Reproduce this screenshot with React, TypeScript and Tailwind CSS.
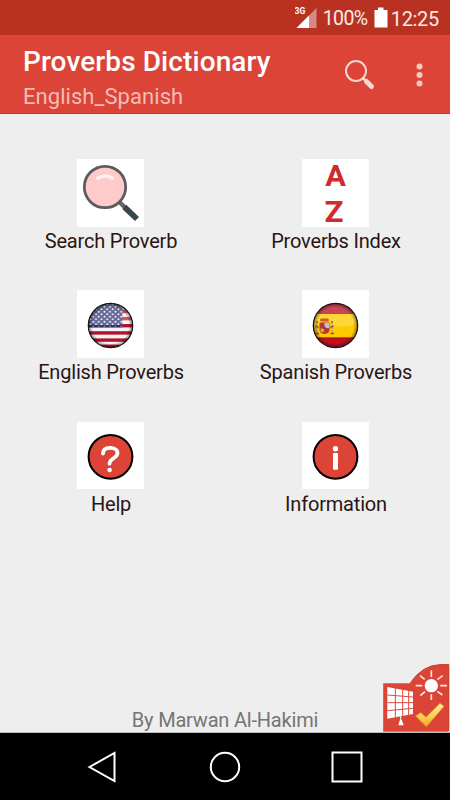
import React from 'react';

interface MenuItem {
    label: string;
    icon: React.ReactNode;
}

const SearchIcon: React.FC = () => (
    <svg width="67" height="68" viewBox="0 0 67 68">
        <path d="M42 42.500l6 6" stroke="#666" strokeWidth="4.500" />
        <path d="M47.300 47.800L60 60" stroke="#37474f" strokeWidth="5.800" />
        <circle cx="28" cy="28" r="20.700" fill="#ffcaca" stroke="#5c5c5f" strokeWidth="2.800" />
        <path d="M21 19.200q7-4.400 14.500 0" fill="none" stroke="#fff0f0" strokeWidth="3.600" strokeLinecap="round" />
    </svg>
);

const IndexIcon: React.FC = () => (
    <svg width="67" height="68" viewBox="0 0 67 68" fill="#cf2a2c" className="overflow-visible font-['Roboto',sans-serif] text-[30px] font-bold">
        <text x="23.300" y="27.300" textLength="20.700" lengthAdjust="spacingAndGlyphs">A</text>
        <text x="22.500" y="63" textLength="19" lengthAdjust="spacingAndGlyphs">Z</text>
    </svg>
);

const UsFlagIcon: React.FC = () => (
    <svg width="67" height="68" viewBox="0 0 67 68">
        <defs>
            <clipPath id="us-clip"><circle cx="33.500" cy="35.500" r="22" /></clipPath>
            <radialGradient id="us-shade">
                <stop offset="0.8" stopColor="#000" stopOpacity="0" />
                <stop offset="1" stopColor="#000" stopOpacity="0.45" />
            </radialGradient>
            <pattern id="us-stars" width="5.600" height="5" patternUnits="userSpaceOnUse" x="12" y="13">
                <circle cx="1.400" cy="1.300" r="0.950" fill="#fff" />
                <circle cx="4.200" cy="3.800" r="0.950" fill="#fff" />
            </pattern>
        </defs>
        <g clipPath="url(#us-clip)">
            <rect x="11" y="13" width="45" height="45" fill="#f4f2f3" />
            {[12.6, 19.8, 26.9, 34, 41.2, 48.4, 54.6].map((y) => (
                <rect key={y} x="11" y={y} width="45" height="3.400" fill="#b3122c" />
            ))}
            <rect x="11" y="13" width="34.300" height="24.300" fill="#252766" />
            <rect x="11" y="13" width="34.300" height="23.500" fill="url(#us-stars)" />
            <path d="M11 12h45v21q-22 4-45 1z" fill="#fff" fillOpacity="0.300" />
        </g>
        <circle cx="33.500" cy="35.500" r="22.500" fill="url(#us-shade)" />
        <circle cx="33.500" cy="35.500" r="22.200" fill="none" stroke="#141318" strokeWidth="1.200" />
    </svg>
);

const SpainFlagIcon: React.FC = () => (
    <svg width="67" height="68" viewBox="0 0 67 68">
        <defs>
            <clipPath id="es-clip"><circle cx="33.500" cy="35.500" r="22" /></clipPath>
            <radialGradient id="es-shade">
                <stop offset="0.8" stopColor="#000" stopOpacity="0" />
                <stop offset="1" stopColor="#000" stopOpacity="0.45" />
            </radialGradient>
        </defs>
        <g clipPath="url(#es-clip)">
            <rect x="11" y="12" width="45" height="47" fill="#bd1022" />
            <rect x="11" y="24" width="45" height="23.300" fill="#fecb00" />
            <path d="M11 12h45v20q-5 4-15 4.500t-30-2z" fill="#fff" fillOpacity="0.220" />
            <g>
                <rect x="18" y="28.500" width="9" height="3" rx="1.500" fill="#c1622c" />
                <path d="M17.500 32.500h10v7q0 4-5 4.500q-5-.5-5-4.500z" fill="#b93a2b" />
                <rect x="22.500" y="33" width="4.500" height="5" fill="#d9b9bd" />
                <rect x="18.500" y="38.500" width="3.500" height="3.500" fill="#e0a42d" />
                <circle cx="22.500" cy="38" r="1.400" fill="#41559b" />
                <path d="M15 33v9.500M30 33v9.500" stroke="#b7ab9c" strokeWidth="1.600" />
                <path d="M13.500 36l3 1.500M31.500 36l-3 1.500M13.500 43.500h3.500M28.500 43.500h3.500" stroke="#a64637" strokeWidth="1.400" />
                <path d="M14 32h2M29 32h2" stroke="#9a5a30" strokeWidth="1.600" />
            </g>
        </g>
        <circle cx="33.500" cy="35.500" r="22.500" fill="url(#es-shade)" />
        <circle cx="33.500" cy="35.500" r="22.200" fill="none" stroke="#1a1212" strokeWidth="1.200" />
    </svg>
);

const HelpIcon: React.FC = () => (
    <svg width="67" height="68" viewBox="0 0 67 68">
        <circle cx="33.500" cy="34.800" r="21.900" fill="#db4437" stroke="#000" strokeWidth="2" />
        <path d="M26 31.500c0-4.300 3.300-5.600 7-5.600c4.300 0 7.500 1.800 7.500 5.200c0 5.200-8 5.200-8 10.600" fill="none" stroke="#fff" strokeWidth="3.800" strokeLinecap="round" />
        <circle cx="32.600" cy="48" r="2.300" fill="#fff" />
    </svg>
);

const InfoIcon: React.FC = () => (
    <svg width="67" height="68" viewBox="0 0 67 68">
        <circle cx="33.500" cy="34.800" r="21.900" fill="#db4437" stroke="#000" strokeWidth="2" />
        <circle cx="33.500" cy="26.700" r="2.700" fill="#fff" />
        <rect x="31" y="31" width="5" height="16.700" rx="0.800" fill="#fff" />
    </svg>
);

const MENU_ITEMS: MenuItem[] = [
    { label: 'Search Proverb', icon: <SearchIcon /> },
    { label: 'Proverbs Index', icon: <IndexIcon /> },
    { label: 'English Proverbs', icon: <UsFlagIcon /> },
    { label: 'Spanish Proverbs', icon: <SpainFlagIcon /> },
    { label: 'Help', icon: <HelpIcon /> },
    { label: 'Information', icon: <InfoIcon /> },
];

const StatusBar: React.FC = () => (
    <div className="flex h-[35px] items-center justify-end bg-[#b93221] pr-[11px] text-xl leading-6 text-[#fbeae8]">
        <svg width="22" height="24" viewBox="0 0 22 24" className="mt-px mr-1.5">
            <text x="-0.500" y="7.500" fill="#fff" className="text-[8.500px] font-bold">3G</text>
            <path d="M21.500 2v20H1.500z" fill="#d98a80" />
            <path d="M14 9.500V22H1.500z" fill="#fff" />
        </svg>
        <span className="mt-[3px] w-[45px] text-[19.500px] tracking-[-0.600px] whitespace-nowrap">100%</span>
        <svg width="14" height="21" viewBox="0 0 14 21" className="mr-[3px] ml-[6px]">
            <path d="M4 .5h5.500v2.500H13.500V20.500H.5V3H4z" fill="#fff" />
        </svg>
        <span className="mt-[3px] tracking-[-0.300px]">12:25</span>
    </div>
);

const AppBar: React.FC = () => (
    <header className="flex h-[79px] items-center border-b border-[#c9321f] bg-[#db4437] pr-[27.500px] pl-[23px]">
        <div className="flex-1 pt-[11px]">
            <h1 className="text-[28px] leading-[34px] font-medium tracking-[0.100px] text-white">Proverbs Dictionary</h1>
            <p className="text-[22px] leading-[35px] tracking-[0.050px] text-[#f3bcb7]">English_Spanish</p>
        </div>
        <svg width="32" height="32" viewBox="0 0 32 32" className="mt-[2px] mr-[39.500px]" fill="none" stroke="#f9d5d2">
            <circle cx="12" cy="12" r="10" strokeWidth="2" />
            <path d="M19 19l4 4" strokeWidth="2.500" />
            <path d="M22.500 22.500l5 5" strokeWidth="5" strokeLinecap="round" />
        </svg>
        <svg width="7" height="24" viewBox="0 0 7 24" className="mt-[2px]" fill="#f7c9c5">
            <circle cx="3.500" cy="3.500" r="3" />
            <circle cx="3.500" cy="12" r="3" />
            <circle cx="3.500" cy="20.500" r="3" />
        </svg>
    </header>
);

const BrandLogo: React.FC = () => (
    <svg width="67" height="68" viewBox="40 29 201 204" className="absolute right-0 bottom-0">
        <defs>
            <linearGradient id="check-fill" x1="0" y1="0" x2="0" y2="1">
                <stop offset="0" stopColor="#fff0a0" />
                <stop offset="0.5" stopColor="#ffd45c" />
                <stop offset="1" stopColor="#efa51e" />
            </linearGradient>
        </defs>
        <path d="M41 88h80q36-55 90-57h26v199H41z" fill="#db4437" stroke="#f0602c" strokeWidth="3" />
        <path d="M120 88q36-55 91-57h26v199H41" fill="none" stroke="#b5291f" strokeWidth="2" />
        <path d="M53 98l77 14v67l-77 14z" fill="#fff" />
        <path d="M53 122l77 6M53 145h77M53 169l77-7M77 100v90M99 104v83M117 108v76" stroke="#d94b40" strokeWidth="3" />
        <path d="M93 185v14" stroke="#fff" strokeWidth="3" />
        <path d="M91 196h5l6 17H86z" fill="#fff" />
        <circle cx="185" cy="94" r="20" fill="#fff" />
        <path d="M185 48v20M185 120v17M138 94h20M212 94h20M151 64l14 11M219 64l-16 12M152 124l14-12M218 122l-15-11" stroke="#ffe4e0" strokeWidth="5" />
        <path d="M138 185l15-10l16 14l42-42l12 9l-53 61z" fill="url(#check-fill)" stroke="#e69b25" strokeWidth="2" />
    </svg>
);

const NavBar: React.FC = () => (
    <nav className="flex h-[67px] items-center justify-center gap-[90.500px] bg-black pr-px">
        <svg width="32" height="32" viewBox="0 0 32 32" fill="none" stroke="#fff" strokeWidth="2">
            <path d="M3.500 16L28.500 2v28z" />
        </svg>
        <svg width="32" height="32" viewBox="0 0 32 32" fill="none" stroke="#fff" strokeWidth="2">
            <circle cx="16" cy="16" r="14.200" />
        </svg>
        <svg width="32" height="32" viewBox="0 0 32 32" fill="none" stroke="#fff" strokeWidth="2">
            <rect x="1.500" y="1.500" width="29" height="29" />
        </svg>
    </nav>
);

const App: React.FC = () => {
    return (
        <div className="flex h-[800px] w-[450px] flex-col overflow-hidden bg-[#eeeeee] font-['Roboto',sans-serif]">
            <StatusBar />
            <AppBar />
            <main className="relative flex flex-1 flex-col border-b border-[#bdbdbd] pt-[45px]">
                <div className="grid grid-cols-2">
                    {MENU_ITEMS.map((item) => (
                        <button key={item.label} className="flex h-[131.300px] flex-col items-center pr-1">
                            <span className="h-[67.500px] w-[67px] bg-white">{item.icon}</span>
                            <span className="mt-[2.500px] pl-px text-xl leading-6 tracking-[-0.180px] whitespace-nowrap text-[#2a1515]">{item.label}</span>
                        </button>
                    ))}
                </div>
                <p className="mt-auto text-center text-xl leading-6 tracking-[-0.200px] text-[#757575]">By Marwan Al-Hakimi</p>
                <BrandLogo />
            </main>
            <NavBar />
        </div>
    );
};

export default App;
